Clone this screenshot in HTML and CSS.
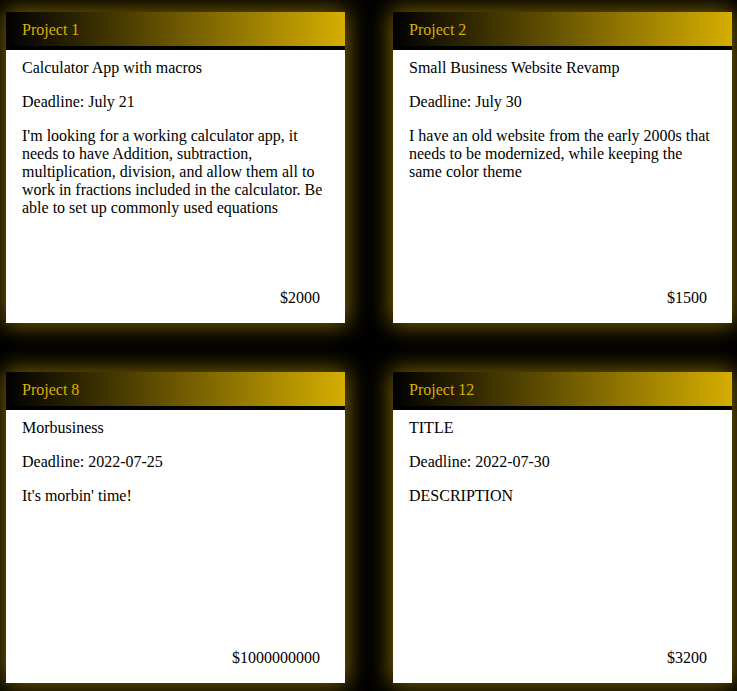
FILE: index.html
```html
<!DOCTYPE html>
<html>
<head>
<meta charset="utf-8">
<link rel="stylesheet" href="styles.css">
</head>
<body>
<div class="grid">
  <div class="card">
    <div class="card-head">Project 1</div>
    <div class="card-body">
      <p class="title">Calculator App with macros</p>
      <p class="deadline">Deadline: July 21</p>
      <p class="desc">I'm looking for a working calculator app, it needs to have Addition, subtraction, multiplication, division, and allow them all to work in fractions included in the calculator. Be able to set up commonly used equations</p>
      <p class="price">$2000</p>
    </div>
  </div>
  <div class="card">
    <div class="card-head">Project 2</div>
    <div class="card-body">
      <p class="title">Small Business Website Revamp</p>
      <p class="deadline">Deadline: July 30</p>
      <p class="desc">I have an old website from the early 2000s that needs to be modernized, while keeping the same color theme</p>
      <p class="price">$1500</p>
    </div>
  </div>
  <div class="card">
    <div class="card-head">Project 8</div>
    <div class="card-body">
      <p class="title">Morbusiness</p>
      <p class="deadline">Deadline: 2022-07-25</p>
      <p class="desc">It's morbin' time!</p>
      <p class="price">$1000000000</p>
    </div>
  </div>
  <div class="card">
    <div class="card-head">Project 12</div>
    <div class="card-body">
      <p class="title">TITLE</p>
      <p class="deadline">Deadline: 2022-07-30</p>
      <p class="desc">DESCRIPTION</p>
      <p class="price">$3200</p>
    </div>
  </div>
</div>
</body>
</html>
```
FILE: styles.css
```css
html, body {
  margin: 0;
  padding: 0;
  background: #000;
}
body {
  font-family: "Liberation Serif", "Times New Roman", serif;
  font-size: 16px;
  line-height: 18px;
  color: #000;
}
.grid {
  display: grid;
  grid-template-columns: 339px 339px;
  column-gap: 48px;
  row-gap: 49px;
  padding: 12px 5px 8px 6px;
}
.card {
  height: 311px;
  background: #fff;
  display: flex;
  flex-direction: column;
  box-shadow: 0 0 22px 2px rgba(212, 170, 0, 0.6);
}
.card-head {
  box-sizing: border-box;
  height: 38px;
  padding: 9px 16px 7px 16px;
  background: linear-gradient(to right, #000 0%, #d6ae00 100%);
  color: #d9b000;
  border-bottom: 4px solid #000;
}
.card-body {
  flex: 1;
  display: flex;
  flex-direction: column;
  padding: 9px 25px 16px 16px;
}
.card-body p {
  margin: 0 0 16px 0;
}
.card-body .desc {
  margin-right: -9px;
}
.card-body .price {
  margin: auto 0 0 0;
  text-align: right;
}
```
